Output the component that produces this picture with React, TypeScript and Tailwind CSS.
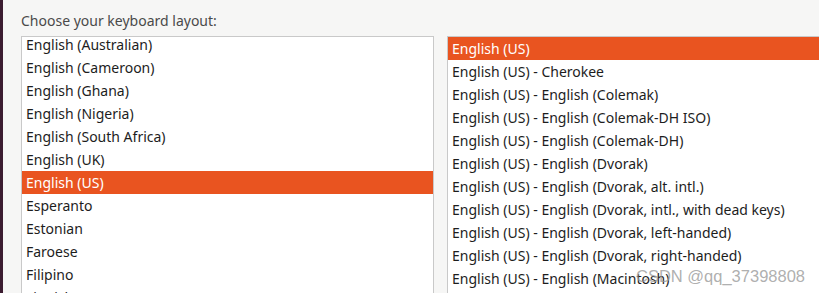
const leftItems = [
  "English (Australian)",
  "English (Cameroon)",
  "English (Ghana)",
  "English (Nigeria)",
  "English (South Africa)",
  "English (UK)",
  "English (US)",
  "Esperanto",
  "Estonian",
  "Faroese",
  "Filipino",
  "Finnish",
];

const rightItems = [
  "English (US)",
  "English (US) - Cherokee",
  "English (US) - English (Colemak)",
  "English (US) - English (Colemak-DH ISO)",
  "English (US) - English (Colemak-DH)",
  "English (US) - English (Dvorak)",
  "English (US) - English (Dvorak, alt. intl.)",
  "English (US) - English (Dvorak, intl., with dead keys)",
  "English (US) - English (Dvorak, left-handed)",
  "English (US) - English (Dvorak, right-handed)",
  "English (US) - English (Macintosh)",
];

function Row({ label, selected }: { label: string; selected: boolean }) {
  return (
    <div
      className={
        "h-[23px] shrink-0 flex items-center px-[4px] whitespace-nowrap " +
        (selected ? "bg-[#e95420] text-white" : "text-[#1d1d1d]")
      }
    >
      {label}
    </div>
  );
}

export default function App() {
  return (
    <div
      className="relative flex w-[819px] h-[293px] overflow-hidden bg-[#f6f6f5] text-[14px]"
      style={{ fontFamily: '"Noto Sans", "DejaVu Sans", sans-serif' }}
    >
      {/* desktop edge */}
      <div className="w-[3px] shrink-0 bg-[#3b1c30]" />

      <div className="flex-1 flex flex-col pl-[18px] min-h-0">
        <div className="h-[36px] shrink-0 pt-[11px] text-[#4a4a4a] leading-[20px]">
          Choose your keyboard layout:
        </div>

        <div className="flex gap-[13px] flex-1 min-h-0">
          <div className="w-[413px] shrink-0 border border-b-0 border-[#c9c9c9] bg-white overflow-hidden">
            <div className="-mt-[4px]">
              {leftItems.map((it) => (
                <Row key={it} label={it} selected={it === "English (US)"} />
              ))}
            </div>
          </div>

          <div className="flex-1 border border-r-0 border-b-0 border-[#c9c9c9] bg-white overflow-hidden">
            {rightItems.map((it, i) => (
              <Row key={it} label={it} selected={i === 0} />
            ))}
          </div>
        </div>
      </div>

      {/* watermark */}
      <div
        className="absolute left-[636px] top-[264px] text-[16.5px] text-[#9a9a9a]/80 whitespace-nowrap"
        style={{ fontFamily: '"Liberation Sans", Arial, sans-serif' }}
      >
        CSDN @qq_37398808
      </div>
    </div>
  );
}
